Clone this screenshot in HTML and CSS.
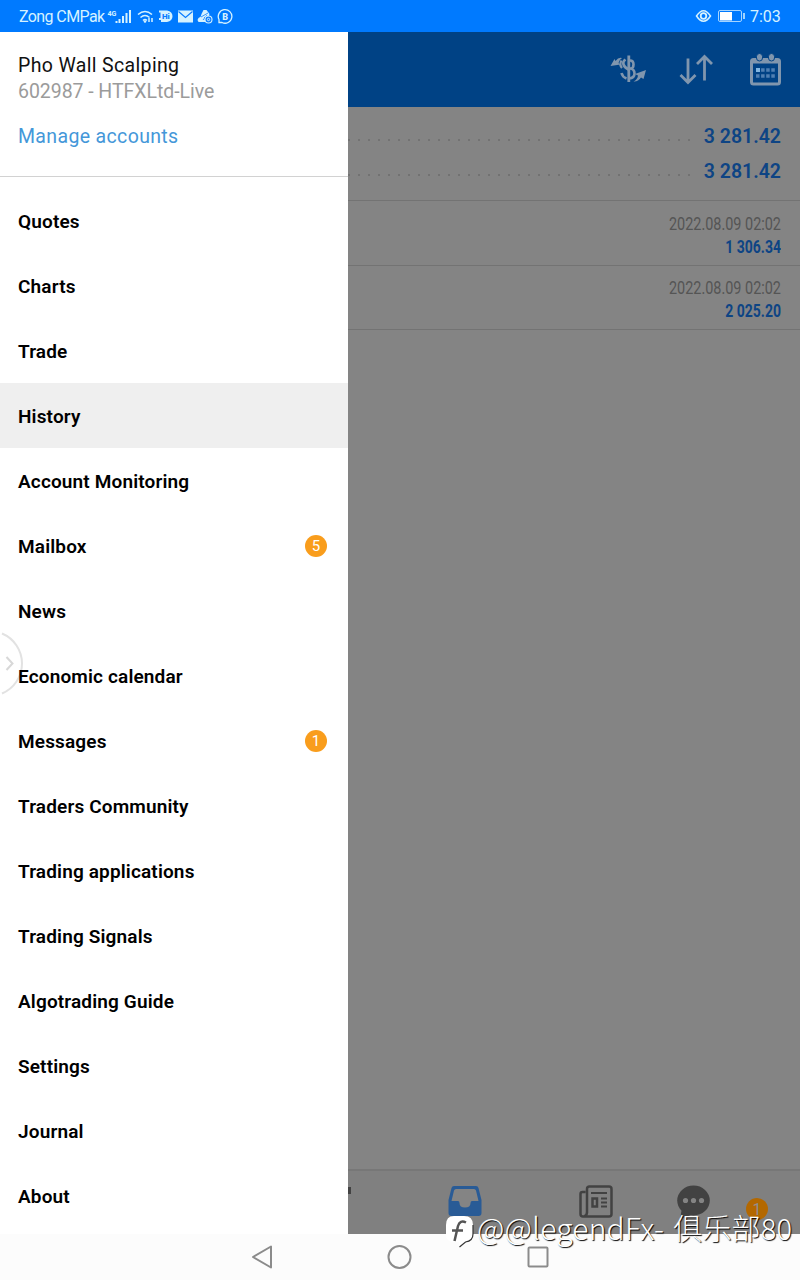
FILE: index.html
```
<!DOCTYPE html>
<html lang="en">
<head>
  <meta charset="UTF-8">
  <meta name="viewport" content="width=device-width, initial-scale=1.0">
  <title>History</title>
  <link rel="stylesheet" href="styles.css">
</head>
<body>
  <div class="screen">

    <!-- status bar -->
    <header class="status-bar">
      <span class="carrier">Zong CMPak</span>
      <svg class="status-icons" width="126" height="20" viewBox="107 6 126 20">
        <text x="107.500" y="15.500" class="net-type" textLength="9" lengthAdjust="spacingAndGlyphs">4G</text>
        <g stroke="#d5f2ff" stroke-width="2" fill="none">
          <path d="M116.500 23v-2M119.500 23v-4M123 23v-7M126.500 23v-10M130 23v-13"/>
          <g stroke-width="1.5">
            <path d="M138 14.500q7-6 14 0M140.500 17.500q4.500-4 9 0M143 20.500q2-2 4 0"/>
            <path d="M149 18v4M152 18v4"/>
          </g>
        </g>
        <circle cx="145" cy="21.500" r="1.3" fill="#d5f2ff"/>
        <path d="M159 10.500h8q5.500 1 5.500 5.800t-5.500 5.700h-6v-2h-2v-2h1.500v-5.500h-1.500z" fill="#d5f2ff"/>
        <text x="162" y="19.300" class="hi">Hi</text>
        <rect x="178" y="10.500" width="15" height="12" fill="#d5f2ff"/>
        <path d="M178.500 11.500l7 6 7-6" fill="none" stroke="#0a7cff" stroke-width="1.2"/>
        <path d="M201.500 14l2-4h3l3 4-1 3h-8zM198.500 18l5-3 2 7h-7l-1-2z" fill="#d5f2ff"/>
        <path d="M201 17l7-4M203 20l4-5" stroke="#0a7cff" stroke-width=".8"/>
        <circle cx="208.500" cy="19.500" r="3.500" fill="#0a7cff" stroke="#d5f2ff" stroke-width="1.1"/>
        <circle cx="208.500" cy="19.500" r="1.2" fill="none" stroke="#d5f2ff"/>
        <path d="M219 22.500v-3a6.800 6.800 0 1 1 3 3z" fill="none" stroke="#d5f2ff" stroke-width="1.300"/>
        <text x="222.200" y="19.800" class="biz">B</text>
      </svg>
      <svg class="battery" width="52" height="16" viewBox="695 8 52 16">
        <path d="M696.500 16q7-10.500 14 0-7 10.500-14 0z" fill="none" stroke="#d5f2ff" stroke-width="1.500"/>
        <circle cx="703.500" cy="16" r="2.800" fill="none" stroke="#d5f2ff" stroke-width="1.800"/>
        <rect x="718.500" y="10.500" width="23" height="11" rx="1.500" fill="none" stroke="#a5d4ff"/>
        <rect x="720" y="12" width="12" height="8.500" fill="#fff"/>
        <path d="M744 13v6" stroke="#d5f2ff" stroke-width="1.500"/>
      </svg>
      <span class="clock">7:03</span>
    </header>

    <div class="app">
      <!-- side menu -->
      <aside class="drawer">
        <svg class="edge-handle" width="24" height="64" viewBox="0 0 24 64">
          <path d="M2 1.500A32.500 32.500 0 0 1 2 61.500" fill="none" stroke="#e2e2e2" stroke-width="2"/>
          <path d="M6.500 25l6 6.500-6 6.500" fill="none" stroke="#d8d8d8" stroke-width="2"/>
        </svg>
        <div class="account">
          <div class="account-name">Pho Wall Scalping</div>
          <div class="account-id">602987 - HTFXLtd-Live</div>
          <a class="manage">Manage accounts</a>
        </div>
        <ul class="menu">
          <li>Quotes</li>
          <li>Charts</li>
          <li>Trade</li>
          <li class="active">History</li>
          <li>Account Monitoring</li>
          <li>Mailbox <span class="badge">5</span></li>
          <li>News</li>
          <li>Economic calendar</li>
          <li>Messages <span class="badge">1</span></li>
          <li>Traders Community</li>
          <li>Trading applications</li>
          <li>Trading Signals</li>
          <li>Algotrading Guide</li>
          <li>Settings</li>
          <li>Journal</li>
          <li>About</li>
        </ul>
      </aside>

      <!-- dimmed history page -->
      <main class="page">
        <div class="toolbar">
          <svg width="36" height="32" viewBox="610 54 36 32" fill="none" stroke="#8096ae" stroke-width="2.600">
            <path d="M628.800 55.500v26.500" stroke-width="2.800"/>
            <path d="M629 60.500h1q3.500 0 3.500 4t-3 4M629 68.500h1q4.500.5 4.500 5t-5.500 5M625.500 59.500q-3 2-2 5t5 5M621.500 73q1 4 5 5.500"/>
            <path d="M621.500 60.500q-2.500 4 .5 7.500" stroke-width="2.200"/>
            <path d="M610.500 66l4-7 1 2q3-4 6.500-3-3 2-3.500 5l2 1.500zM646 70l-2.500 9-2.500-1.500q-3 4.500-7.500 4 4-2 4.500-6l-3-1.500z" fill="#8096ae" stroke="none"/>
          </svg>
          <svg width="34" height="32" viewBox="679 54 34 32" fill="none" stroke="#8096ae" stroke-width="2.800">
            <path d="M688 58.500v24M680.500 75l7.500 7.500 7.500-7.500M704.500 80.500V56.500M697 64l7.500-7.500 7.500 7.500"/>
          </svg>
          <svg width="32" height="34" viewBox="750 52 32 34">
            <rect x="751.500" y="58.500" width="28" height="24.500" rx="2" fill="none" stroke="#8096ae" stroke-width="3"/>
            <path d="M751 58h29v4.500h-29z" fill="#8096ae"/>
            <rect x="756.500" y="52.500" width="6" height="7.500" rx="3" fill="#8096ae" stroke="#004285"/>
            <rect x="768.500" y="52.500" width="6" height="7.500" rx="3" fill="#8096ae" stroke="#004285"/>
            <path d="M756 69h19M756 75h19" stroke="#4f7fb2" stroke-width="3.500" stroke-dasharray="3.500 1.600"/>
            <path d="M756 69h4" stroke="#82b6e2" stroke-width="4"/>
          </svg>
        </div>

        <section class="summary">
          <div class="sum-row"><i class="dots"></i><b>3 281.42</b></div>
          <div class="sum-row"><i class="dots"></i><b>3 281.42</b></div>
        </section>
        <section class="deal">
          <div class="deal-time">2022.08.09 02:02</div>
          <div class="deal-sum">1 306.34</div>
        </section>
        <section class="deal">
          <div class="deal-time">2022.08.09 02:02</div>
          <div class="deal-sum">2 025.20</div>
        </section>

        <nav class="tabs">
          <svg width="452" height="64" viewBox="348 1171 452 64">
            <path d="M348 1187h3v7h-3z" fill="#424242"/>
            <path d="M454 1186h22q2 0 2.500 2l3 12v13q0 3-3 3h-27q-3 0-3-3v-13l3-12q.5-2 2.500-2z" fill="#295b96"/>
            <path d="M456 1189h18q1.500 0 2 1.500l2.500 10.500h-6.500q-1.500 0-1.500 2 0 4.500-5.500 4.500t-5.500-4.500q0-2-1.500-2h-6.500l2.500-10.500q.5-1.500 2-1.500z" fill="#848484"/>
            <g fill="none" stroke="#424242" stroke-width="2.500">
              <path d="M588.500 1186.500h20.500q2.500 0 2.500 2.500v25q0 2.500-2.500 2.500h-26q-2.500 0-2.500-2.500v-20q0-2 2-2h3M587 1212q0 4-3 4.500M587 1213v-24q0-2.500 2.500-2.500"/>
              <path d="M591 1193h16" stroke-width="2"/>
              <rect x="592.500" y="1198.500" width="4.500" height="8"/>
              <path d="M601 1198.500h6M601 1202.500h6M601 1206.500h6" stroke-width="2"/>
            </g>
            <ellipse cx="693.500" cy="1200.500" rx="16.300" ry="15" fill="#424242"/>
            <path d="M682 1208l-2 11 11-4z" fill="#424242"/>
            <g fill="#848484">
              <circle cx="685.500" cy="1200.500" r="2.600"/>
              <circle cx="693.500" cy="1200.500" r="2.600"/>
              <circle cx="701.500" cy="1200.500" r="2.600"/>
            </g>
            <circle cx="757" cy="1209" r="11" fill="#b36800"/>
            <text x="752.500" y="1214.500" class="tab-badge">1</text>
          </svg>
        </nav>
      </main>
    </div>

    <!-- system buttons -->
    <footer class="nav-bar">
      <svg width="22" height="26" viewBox="0 0 22 26"><path d="M20 2.500v21L2 13z"/></svg>
      <svg width="26" height="26" viewBox="0 0 26 26"><circle cx="12.500" cy="13" r="11"/></svg>
      <svg width="22" height="26" viewBox="0 0 22 26"><rect x="1.500" y="3.500" width="19" height="19" rx="1"/></svg>
    </footer>

    <div class="watermark">
      <svg width="32" height="34" viewBox="0 0 32 34">
        <path d="M9 1h10q9 0 9 9v8q0 8-8 9l-6 5v-5H9q-8 0-8-8v-9q0-9 8-9z" fill="#fff"/>
        <path d="M28 10v9q0 7-7.500 8l-6 5" fill="none" stroke="#333" stroke-width="1.200"/>
        <path d="M21 7.500q-6-3-8 3.500L9.500 26M7 15.500h11" fill="none" stroke="#555" stroke-width="2.500"/>
      </svg>
      <span>@@legendFx- </span><span class="club">俱乐部80</span>
    </div>
  </div>
</body>
</html>
```
FILE: styles.css
```
* {
  box-sizing: border-box;
}

body {
  margin: 0;
  font-family: Roboto, "Noto Sans CJK SC", sans-serif;
}

.screen {
  position: relative;
  display: flex;
  flex-direction: column;
  width: 800px;
  height: 1280px;
  overflow: hidden;
  background: #fff;
}

/* status bar */
.status-bar {
  display: flex;
  align-items: center;
  height: 32px;
  padding: 0 19px;
  background: #007aff;
  color: #d5f2ff;
  font-size: 16px;
}

.carrier {
  width: 88px;
  white-space: nowrap;
  letter-spacing: -0.6px;
}

.battery {
  margin-left: auto;
}

.clock {
  width: 31px;
  margin-left: 3px;
}

.net-type {
  font-size: 8px;
  font-weight: 700;
  fill: #d5f2ff;
}

.hi {
  font-size: 8px;
  font-weight: 900;
  fill: #0a7cff;
}

.biz {
  font-size: 9px;
  font-weight: 900;
  fill: #d5f2ff;
}

.app {
  display: flex;
  height: 1202px;
}

/* drawer */
.drawer {
  position: relative;
  width: 348px;
  background: #fff;
}

.account {
  height: 145px;
  padding: 21px 18px 0;
  border-bottom: 1px solid #d2d2d2;
  font-size: 19.5px;
  line-height: 26px;
}

.account-name {
  color: #111;
  letter-spacing: 0.35px;
}

.account-id {
  color: #9b9b9b;
  letter-spacing: -0.05px;
}

.manage {
  display: block;
  margin-top: 19px;
  color: #4497d9;
  letter-spacing: 0.35px;
}

.menu {
  position: relative;
  margin: 0;
  padding: 11px 0 0;
  list-style: none;
}

.menu li {
  display: flex;
  align-items: center;
  justify-content: space-between;
  height: 65px;
  padding: 2px 21px 0 18px;
  color: #000;
  font-size: 19px;
  font-weight: 600;
  letter-spacing: 0.15px;
}

.menu .active {
  background: #efefef;
}

.badge {
  width: 22px;
  height: 22px;
  margin-top: -1px;
  border-radius: 50%;
  background: #f99d1c;
  color: #fff;
  font-size: 15px;
  font-weight: 400;
  line-height: 22px;
  letter-spacing: 0;
  text-align: center;
}

.edge-handle {
  position: absolute;
  left: 0;
  top: 600px;
}

/* history page */
.page {
  display: flex;
  flex-direction: column;
  width: 452px;
  background: #848484;
}

.toolbar {
  display: flex;
  align-items: center;
  justify-content: flex-end;
  height: 75px;
  padding-right: 18px;
  background: #004285;
}

.toolbar svg + svg {
  margin-left: 33px;
}

.toolbar svg + svg + svg {
  margin-left: 37px;
}

.summary {
  height: 94px;
  padding: 12px 19px 0 0;
  border-bottom: 1px solid #737373;
}

.sum-row {
  display: flex;
  align-items: center;
  justify-content: space-between;
  height: 35px;
  color: #0e4484;
  font-size: 19.5px;
}

.sum-row b {
  font-weight: 600;
}

.dots {
  width: 345px;
  height: 2px;
  margin-top: 7px;
  background: repeating-linear-gradient(90deg, #727272 0 2px, transparent 2px 10px);
}

.deal {
  height: 64.5px;
  padding: 12px 19px 0 0;
  border-bottom: 1px solid #737373;
  text-align: right;
  font-size: 17.5px;
  line-height: 23px;
}

.deal + .deal {
  padding-top: 11px;
}

.deal-time,
.deal-sum {
  transform: scaleX(0.825);
  transform-origin: right;
}

.deal-time {
  color: #555;
}

.deal-sum {
  color: #0e4484;
  font-weight: 700;
  transform: scaleX(0.8);
}

.tabs {
  height: 65px;
  margin-top: auto;
  border-top: 2px solid #777;
  background: #808080;
}

.tabs svg {
  display: block;
}

.tab-badge {
  font-size: 16px;
  fill: #8f8f8f;
}

/* system buttons */
.nav-bar {
  display: flex;
  align-items: center;
  justify-content: space-between;
  height: 46px;
  padding: 0 251px;
  background: #fcfcfc;
}

.nav-bar svg {
  fill: none;
  stroke: #8b8b8b;
  stroke-width: 2;
  stroke-linejoin: round;
}

.watermark {
  position: absolute;
  left: 445px;
  top: 1209px;
  display: flex;
  align-items: center;
  height: 40px;
  color: #fff;
  font-family: "Noto Sans CJK SC", sans-serif;
  font-size: 30px;
  font-weight: 300;
  white-space: nowrap;
  text-shadow: 1px 1px 1px #000;
}

.watermark svg {
  margin-top: 6px;
}

.watermark span {
  margin-top: -4px;
  letter-spacing: 0.2px;
}

.watermark .club {
  margin-left: 9px;
  font-size: 29px;
}
```
